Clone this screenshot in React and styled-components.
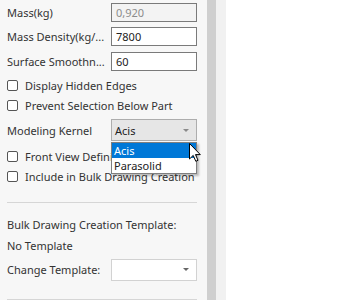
import React from 'react'
import styled, { createGlobalStyle } from 'styled-components'

const GlobalStyle = createGlobalStyle`
  body {
    margin: 0;
    background: #fff;
    font-family: "Noto Sans", "Open Sans", sans-serif;
    font-size: 11px;
    color: #333;
  }
`

function App() {
  return (
    <Screen>
      <GlobalStyle />
      <Panel>
        <FieldRow>
          <Label>Mass(kg)</Label>
          <TextBox $disabled>0,920</TextBox>
        </FieldRow>
        <FieldRow $top={5}>
          <Label>Mass Density(kg/...</Label>
          <TextBox>7800</TextBox>
        </FieldRow>
        <FieldRow $top={6}>
          <Label>Surface Smoothn...</Label>
          <TextBox>60</TextBox>
        </FieldRow>

        <CheckRow $top={4}>
          <Box />
          <span>Display Hidden Edges</span>
        </CheckRow>
        <CheckRow>
          <Box />
          <span>Prevent Selection Below Part</span>
        </CheckRow>

        <FieldRow $top={3} $h={22}>
          <Label>Modeling Kernel</Label>
          <ComboWrap>
            <Combo>
              <span>Acis</span>
              <Arrow $light />
            </Combo>
            <DropList>
              <Option $active>Acis</Option>
              <Option>Parasolid</Option>
            </DropList>
          </ComboWrap>
        </FieldRow>

        <CheckRow $top={5}>
          <Box />
          <span>Front View Definition</span>
        </CheckRow>
        <CheckRow>
          <Box />
          <span>Include in Bulk Drawing Creation</span>
        </CheckRow>

        <Divider $top={15} />

        <TextLine $top={10.5}>Bulk Drawing Creation Template:</TextLine>
        <TextLine>No Template</TextLine>

        <FieldRow $top={3} $h={22}>
          <Label>Change Template:</Label>
          <Combo $plain>
            <span />
            <Arrow />
          </Combo>
        </FieldRow>

        <Divider $top={18} />
      </Panel>
      <Gutter />
      <Edge />
      <Canvas />
      <Cursor viewBox="0 0 12 19" width="12" height="19">
        <path
          d="M0.5 0.5 L0.5 16 L4.2 12.4 L6.8 18.3 L9 17.3 L6.5 11.6 L11.3 11.6 Z"
          fill="#fff"
          stroke="#000"
          strokeWidth="1"
          strokeLinejoin="miter"
        />
      </Cursor>
    </Screen>
  )
}

export default App

const Screen = styled.div`
  position: relative;
  display: flex;
  width: 340px;
  height: 300px;
  overflow: hidden;
`

const Panel = styled.div`
  width: 207px;
  flex-shrink: 0;
  box-sizing: border-box;
  padding: 3px 10px 0 7px;
  background: #f7f7f7;
  display: flex;
  flex-direction: column;
`

const Gutter = styled.div`
  width: 9px;
  background: #cfcfcf;
`

const Edge = styled.div`
  width: 10px;
  background: #f1f1f1;
`

const Canvas = styled.div`
  flex: 1;
  background: #fff;
`

const FieldRow = styled.div`
  display: grid;
  grid-template-columns: 104px 86px;
  align-items: center;
  height: ${p => p.$h || 19}px;
  margin-top: ${p => p.$top || 0}px;
  flex-shrink: 0;
`

const Label = styled.div`
  white-space: nowrap;
  overflow: hidden;
  color: #333;
`

const TextBox = styled.div`
  box-sizing: border-box;
  height: 19px;
  padding: 0 4px;
  line-height: 17px;
  border: 1px solid #7a7a7a;
  background: ${p => (p.$disabled ? '#f3f3f3' : '#fff')};
  color: ${p => (p.$disabled ? '#8c8c8c' : '#222')};
`

const CheckRow = styled.div`
  display: flex;
  align-items: center;
  gap: 7px;
  height: 20.5px;
  margin-top: ${p => p.$top || 0}px;
  white-space: nowrap;
  overflow: hidden;
  flex-shrink: 0;
`

const Box = styled.span`
  width: 11px;
  height: 11px;
  box-sizing: border-box;
  border: 1px solid #555;
  border-radius: 2px;
  background: #fff;
  flex-shrink: 0;
`

const ComboWrap = styled.div`
  position: relative;
  height: 22px;
`

const Combo = styled.div`
  box-sizing: border-box;
  height: 22px;
  display: flex;
  align-items: center;
  justify-content: space-between;
  padding: 0 7px 0 3px;
  border: 1px solid ${p => (p.$plain ? '#d2d2d2' : '#adadad')};
  background: ${p => (p.$plain ? '#fff' : '#e6e6e6')};
  color: #222;
`

const Arrow = styled.span`
  width: 0;
  height: 0;
  border-left: 3px solid transparent;
  border-right: 3px solid transparent;
  border-top: 3px solid ${p => (p.$light ? '#8a8a8a' : '#666')};
`

const DropList = styled.div`
  position: absolute;
  top: 23px;
  left: 0;
  width: 86px;
  box-sizing: border-box;
  border: 1px solid #7f7f7f;
  background: #fff;
  box-shadow: 2px 2px 2px rgba(0, 0, 0, 0.25);
  z-index: 2;
`

const Option = styled.div`
  height: 15px;
  line-height: 15px;
  padding-left: 2px;
  background: ${p => (p.$active ? '#0078d7' : '#fff')};
  color: ${p => (p.$active ? '#fff' : '#222')};
`

const Divider = styled.div`
  height: 1px;
  background: #d6d6d6;
  margin-top: ${p => p.$top || 0}px;
  flex-shrink: 0;
`

const TextLine = styled.div`
  height: 21px;
  line-height: 21px;
  margin-top: ${p => p.$top || 0}px;
  white-space: nowrap;
  flex-shrink: 0;
`

const Cursor = styled.svg`
  position: absolute;
  left: 189px;
  top: 143px;
  z-index: 5;
`
